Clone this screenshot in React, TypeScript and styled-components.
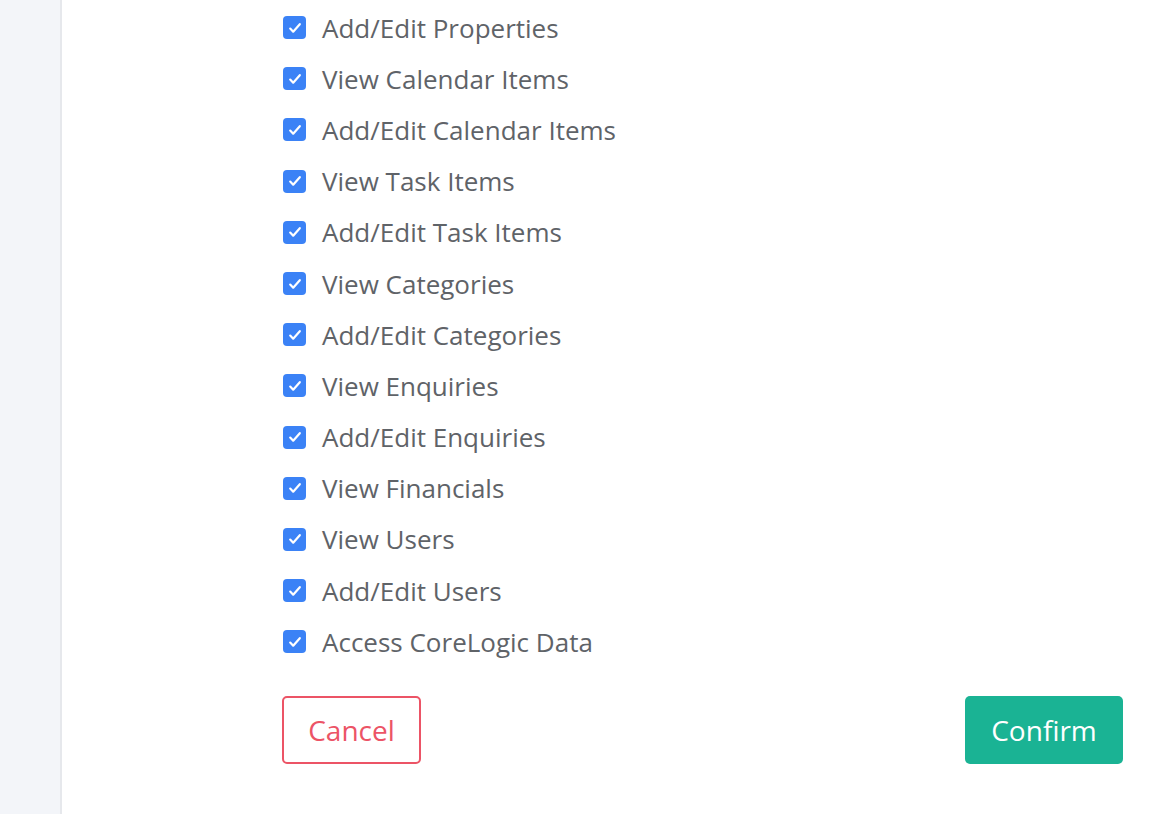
import React from "react";
import styled, { createGlobalStyle } from "styled-components";

const permissions = [
  "Add/Edit Properties",
  "View Calendar Items",
  "Add/Edit Calendar Items",
  "View Task Items",
  "Add/Edit Task Items",
  "View Categories",
  "Add/Edit Categories",
  "View Enquiries",
  "Add/Edit Enquiries",
  "View Financials",
  "View Users",
  "Add/Edit Users",
  "Access CoreLogic Data",
];

function CheckMark() {
  return (
    <svg width="16" height="16" viewBox="0 0 16 16" fill="none">
      <path d="M3.2 8.6l3 3.1L12.8 4.2" stroke="#fff" strokeWidth="2.2" strokeLinecap="round" strokeLinejoin="round" />
    </svg>
  );
}

function App() {
  return (
    <>
      <GlobalStyle />
      <Page>
        <Sidebar />
        <Main>
          <Form>
            <List>
              {permissions.map((p) => (
                <Row key={p}>
                  <Box>
                    <CheckMark />
                  </Box>
                  <Label>{p}</Label>
                </Row>
              ))}
            </List>
            <Actions>
              <CancelButton>Cancel</CancelButton>
              <ConfirmButton>Confirm</ConfirmButton>
            </Actions>
          </Form>
        </Main>
      </Page>
    </>
  );
}

export default App;

const GlobalStyle = createGlobalStyle`
  html, body {
    margin: 0;
    padding: 0;
    background: #fff;
    font-family: "Open Sans", "Noto Sans", sans-serif;
  }
`;

const Page = styled.div`
  display: flex;
  height: 814px;
  overflow: hidden;
`;

const Sidebar = styled.div`
  width: 60px;
  flex-shrink: 0;
  background: #f3f5f9;
  border-right: 2px solid #e6e8ec;
`;

const Main = styled.div`
  flex: 1;
  padding-left: 220px;
  padding-right: 51px;
`;

const Form = styled.div`
  display: flex;
  flex-direction: column;
`;

const List = styled.div`
  display: flex;
  flex-direction: column;
  padding-top: 2px;
`;

const Row = styled.div`
  display: flex;
  align-items: center;
  height: 51.2px;
  padding-left: 1px;
`;

const Box = styled.span`
  width: 23px;
  height: 23px;
  border-radius: 4px;
  background: #3b82f6;
  display: flex;
  align-items: center;
  justify-content: center;
  flex-shrink: 0;
  margin-right: 16px;
`;

const Label = styled.span`
  font-size: 26px;
  color: #5f6368;
  line-height: 1;
`;

const Actions = styled.div`
  display: flex;
  justify-content: space-between;
  margin-top: 29px;
`;

const BaseButton = styled.button`
  height: 68px;
  font-family: "Open Sans", "Noto Sans", sans-serif;
  font-size: 28px;
  border-radius: 5px;
  cursor: pointer;
`;

const CancelButton = styled(BaseButton)`
  width: 139px;
  background: #fff;
  border: 2px solid #ec5466;
  color: #ec5466;
`;

const ConfirmButton = styled(BaseButton)`
  width: 158px;
  background: #1ab394;
  border: none;
  color: #fff;
`;
